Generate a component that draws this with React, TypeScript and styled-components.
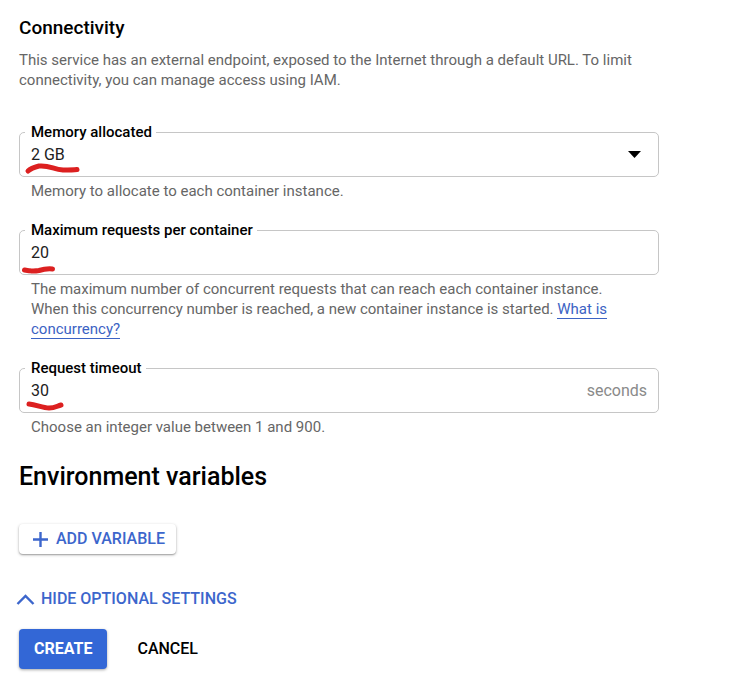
import React from "react";
import styled, { createGlobalStyle } from "styled-components";

const GlobalStyle = createGlobalStyle`
  * { box-sizing: border-box; }
  body {
    margin: 0;
    background: #fff;
    color: #000;
    font-family: Roboto, "Liberation Sans", sans-serif;
    font-size: 15px;
    line-height: 20px;
  }
`;

const Page = styled.main`
  max-width: 678px;
  padding: 16px 19px;
`;

const Title = styled.h3`
  margin: 0 0 10px;
  font-size: 19px;
  line-height: 24px;
  font-weight: 500;
`;

const Intro = styled.p`
  margin: 0;
  color: #666;
`;

const Field = styled.div`
  position: relative;
  margin-top: 29px;
`;

const IntroField = styled(Field)`
  margin-top: 42px;
`;

const Label = styled.label`
  position: absolute;
  top: -10px;
  left: 6px;
  padding: 0 4px 0 6px;
  background: #fff;
  font-weight: 500;
`;

const Outline = styled.div`
  display: flex;
  align-items: center;
  height: 45px;
  padding: 0 11px;
  border: 1px solid #c6c6c6;
  border-radius: 5px;
`;

const Input = styled.input`
  flex: 1;
  min-width: 0;
  padding: 0;
  border: 0;
  outline: 0;
  background: none;
  color: #212121;
  font: inherit;
  font-size: 16px;
`;

const Select = styled.select`
  flex: 1;
  min-width: 0;
  padding: 0;
  border: 0;
  outline: 0;
  appearance: none;
  background: none;
  color: #212121;
  font: inherit;
  font-size: 16px;
`;

const Arrow = styled.svg`
  width: 13px;
  height: 7px;
  margin-right: 6px;
  pointer-events: none;
`;

const Unit = styled.span`
  color: #8a8a8a;
  font-size: 16px;
`;

const Mark = styled.svg`
  position: absolute;
  top: 26px;
  left: 0;
  width: 70px;
  height: 20px;
  overflow: visible;
  pointer-events: none;
  fill: none;
  stroke: #dc2020;
  stroke-width: 5;
  stroke-linecap: round;
  stroke-linejoin: round;
`;

const Hint = styled.p`
  margin: 4px 0 0;
  padding: 0 24px 0 12px;
  color: #666;
`;

const Link = styled.a`
  color: #3c63c4;
  text-decoration: none;
  border-bottom: 1px solid #3c63c4;
`;

const SectionTitle = styled.h2`
  margin: 24px 0 31px;
  font-size: 25px;
  line-height: 32px;
  font-weight: 500;
`;

const Button = styled.button`
  display: flex;
  align-items: center;
  padding: 0;
  border: 0;
  border-radius: 4px;
  background: none;
  color: #000;
  font: inherit;
  font-size: 16px;
  font-weight: 500;
  text-transform: uppercase;
  cursor: pointer;
`;

const AddButton = styled(Button)`
  height: 30px;
  gap: 8px;
  padding: 0 11px 0 14px;
  color: #3c66cc;
  box-shadow: 0 1px 3px rgba(0, 0, 0, 0.3), 0 1px 1px rgba(0, 0, 0, 0.16);
`;

const ToggleButton = styled(Button)`
  margin: 35px 0 0 -3px;
  gap: 6px;
  color: #3c66cc;
`;

const Actions = styled.div`
  display: flex;
  gap: 15px;
  margin-top: 20px;
`;

const CreateButton = styled(Button)`
  height: 40px;
  padding: 0 15px;
  background: #3367d6;
  color: #fff;
  font-weight: 700;
  box-shadow: 0 1px 3px rgba(0, 0, 0, 0.35);
`;

const CancelButton = styled(Button)`
  height: 40px;
  padding: 0 15px;
`;

export default function App() {
  return (
    <Page>
      <GlobalStyle />
      <Title>Connectivity</Title>
      <Intro>
        This service has an external endpoint, exposed to the Internet through a
        default URL. To limit connectivity, you can manage access using IAM.
      </Intro>

      <IntroField>
        <Outline>
          <Select id="memory" defaultValue="2">
            <option value="2">2 GB</option>
          </Select>
          <Arrow viewBox="0 0 13 7" aria-hidden="true">
            <path d="M0 0h13L6.5 7z" />
          </Arrow>
        </Outline>
        <Label htmlFor="memory">Memory allocated</Label>
        <Mark viewBox="0 0 70 20" aria-hidden="true">
          <path d="M9 13C12 10 16 9 20 8C30 7 34 11 44 12C51 12 54 12 58 11.5" />
        </Mark>
        <Hint>Memory to allocate to each container instance.</Hint>
      </IntroField>

      <Field>
        <Outline>
          <Input id="requests" defaultValue="20" />
        </Outline>
        <Label htmlFor="requests">Maximum requests per container</Label>
        <Mark viewBox="0 0 70 20" aria-hidden="true">
          <path d="M5.5 14C10 15 17 15 20 14.5C25 13 28 12.5 33.500 13" />
        </Mark>
        <Hint>
          The maximum number of concurrent requests that can reach each container
          instance. When this concurrency number is reached, a new container
          instance is started. <Link href="#concurrency">What is concurrency?</Link>
        </Hint>
      </Field>

      <Field>
        <Outline>
          <Input id="timeout" defaultValue="30" />
          <Unit>seconds</Unit>
        </Outline>
        <Label htmlFor="timeout">Request timeout</Label>
        <Mark viewBox="0 0 70 20" aria-hidden="true">
          <path d="M10 10C18 11 24 14 30 14C36 14 38 12 42 11" />
        </Mark>
        <Hint>Choose an integer value between 1 and 900.</Hint>
      </Field>

      <SectionTitle>Environment variables</SectionTitle>
      <AddButton type="button">
        <svg width="15" height="15" viewBox="0 0 15 15" aria-hidden="true">
          <path d="M7.5 0v15M0 7.5h15" stroke="currentColor" strokeWidth="2.4" />
        </svg>
        Add variable
      </AddButton>
      <ToggleButton type="button" aria-expanded="true">
        <svg width="19" height="12" viewBox="0 0 19 12" aria-hidden="true">
          <path d="M1.5 11L9.5 3L17.5 11" fill="none" stroke="currentColor" strokeWidth="2.4" />
        </svg>
        Hide optional settings
      </ToggleButton>
      <Actions>
        <CreateButton type="submit">Create</CreateButton>
        <CancelButton type="button">Cancel</CancelButton>
      </Actions>
    </Page>
  );
}
